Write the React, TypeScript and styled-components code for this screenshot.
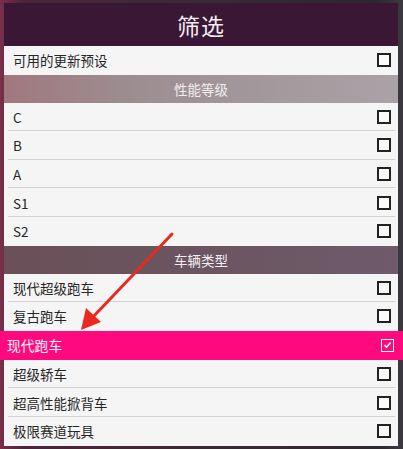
import React from 'react';
import styled, { createGlobalStyle } from 'styled-components';

const GlobalStyle = createGlobalStyle`
  html, body {
    margin: 0;
    padding: 0;
  }
  body {
    font-family: "Noto Sans CJK SC", "Noto Sans", sans-serif;
  }
`;

const Page = styled.div`
  position: relative;
  width: 403px;
  height: 449px;
  overflow: hidden;
  box-sizing: border-box;
  padding: 3px 5px 0 4px;
  background: linear-gradient(90deg, #7a2f48 0%, #4a2438 6%, #3a2a36 50%, #2e2830 94%, #3c3a40 100%);
`;

const Panel = styled.div`
  display: flex;
  flex-direction: column;
`;

const Header = styled.div`
  height: 43px;
  display: flex;
  align-items: center;
  justify-content: center;
  background: #3b1736;
  color: #f4eef2;
  font-size: 23px;
  letter-spacing: 1px;
`;

const SectionHeader = styled.div<{ $tone: 'light' | 'dark' }>`
  height: 28px;
  display: flex;
  align-items: center;
  justify-content: center;
  color: #f3eef1;
  font-size: 13.5px;
  background: ${p =>
    p.$tone === 'light'
      ? 'linear-gradient(90deg, #a0787f 0%, #9c8c90 30%, #a39a9e 70%, #aaa2a6 100%)'
      : 'linear-gradient(90deg, #6a5058 0%, #6a5560 50%, #6f5a6a 100%)'};
`;

const Row = styled.div<{ $line?: boolean }>`
  position: relative;
  height: 28.6px;
  box-sizing: border-box;
  display: flex;
  align-items: center;
  justify-content: space-between;
  padding: 0 7px 0 9px;
  background: #f5f5f5;
  color: #262626;
  font-size: 13.5px;

  ${p =>
    p.$line &&
    `
    &::after {
      content: '';
      position: absolute;
      left: 4px;
      right: 3px;
      bottom: 0;
      height: 1px;
      background: #d3d3d3;
    }
  `}
`;

const HotRow = styled.div`
  height: 29px;
  margin: 0 -5px 0 -4px;
  display: flex;
  align-items: center;
  justify-content: space-between;
  padding: 0 9px 0 7px;
  background: #ff0a7e;
  color: #fff3f9;
  font-size: 13.8px;
`;

const Box = styled.span`
  width: 14px;
  height: 14px;
  box-sizing: border-box;
  border: 2px solid #222;
  background: #fafafa;
`;

const CheckedBox = styled.span`
  width: 13px;
  height: 13px;
  box-sizing: border-box;
  border: 1.5px solid #fff;
  display: flex;
  align-items: center;
  justify-content: center;
`;

const Arrow = styled.svg`
  position: absolute;
  left: 0;
  top: 0;
  pointer-events: none;
`;

const classes = ['C', 'B', 'A', 'S1', 'S2'];
const typesTop = ['现代超级跑车', '复古跑车'];
const typesBottom = ['超级轿车', '超高性能掀背车', '极限赛道玩具'];

export default function App() {
  return (
    <Page>
      <GlobalStyle />
      <Panel>
        <Header>筛选</Header>
        <Row>
          可用的更新预设
          <Box />
        </Row>
        <SectionHeader $tone="light">性能等级</SectionHeader>
        {classes.map((c, i) => (
          <Row key={c} $line={i < classes.length - 1}>
            {c}
            <Box />
          </Row>
        ))}
        <SectionHeader $tone="dark">车辆类型</SectionHeader>
        {typesTop.map((t, i) => (
          <Row key={t} $line={i === 0}>
            {t}
            <Box />
          </Row>
        ))}
        <HotRow>
          现代跑车
          <CheckedBox>
            <svg width="9" height="8" viewBox="0 0 9 8">
              <path d="M1.5 4.2 L3.6 6.2 L7.6 1.6" fill="none" stroke="#fff" strokeWidth="1.6" />
            </svg>
          </CheckedBox>
        </HotRow>
        {typesBottom.map((t, i) => (
          <Row key={t} $line={i < typesBottom.length - 1}>
            {t}
            <Box />
          </Row>
        ))}
      </Panel>
      <Arrow width="403" height="449" viewBox="0 0 403 449">
        <line x1="172" y1="234" x2="92" y2="318" stroke="#ea2a22" strokeWidth="3" strokeLinecap="round" />
        <polygon points="81,330 86,308 101,322" fill="#ea2a22" />
      </Arrow>
    </Page>
  );
}
